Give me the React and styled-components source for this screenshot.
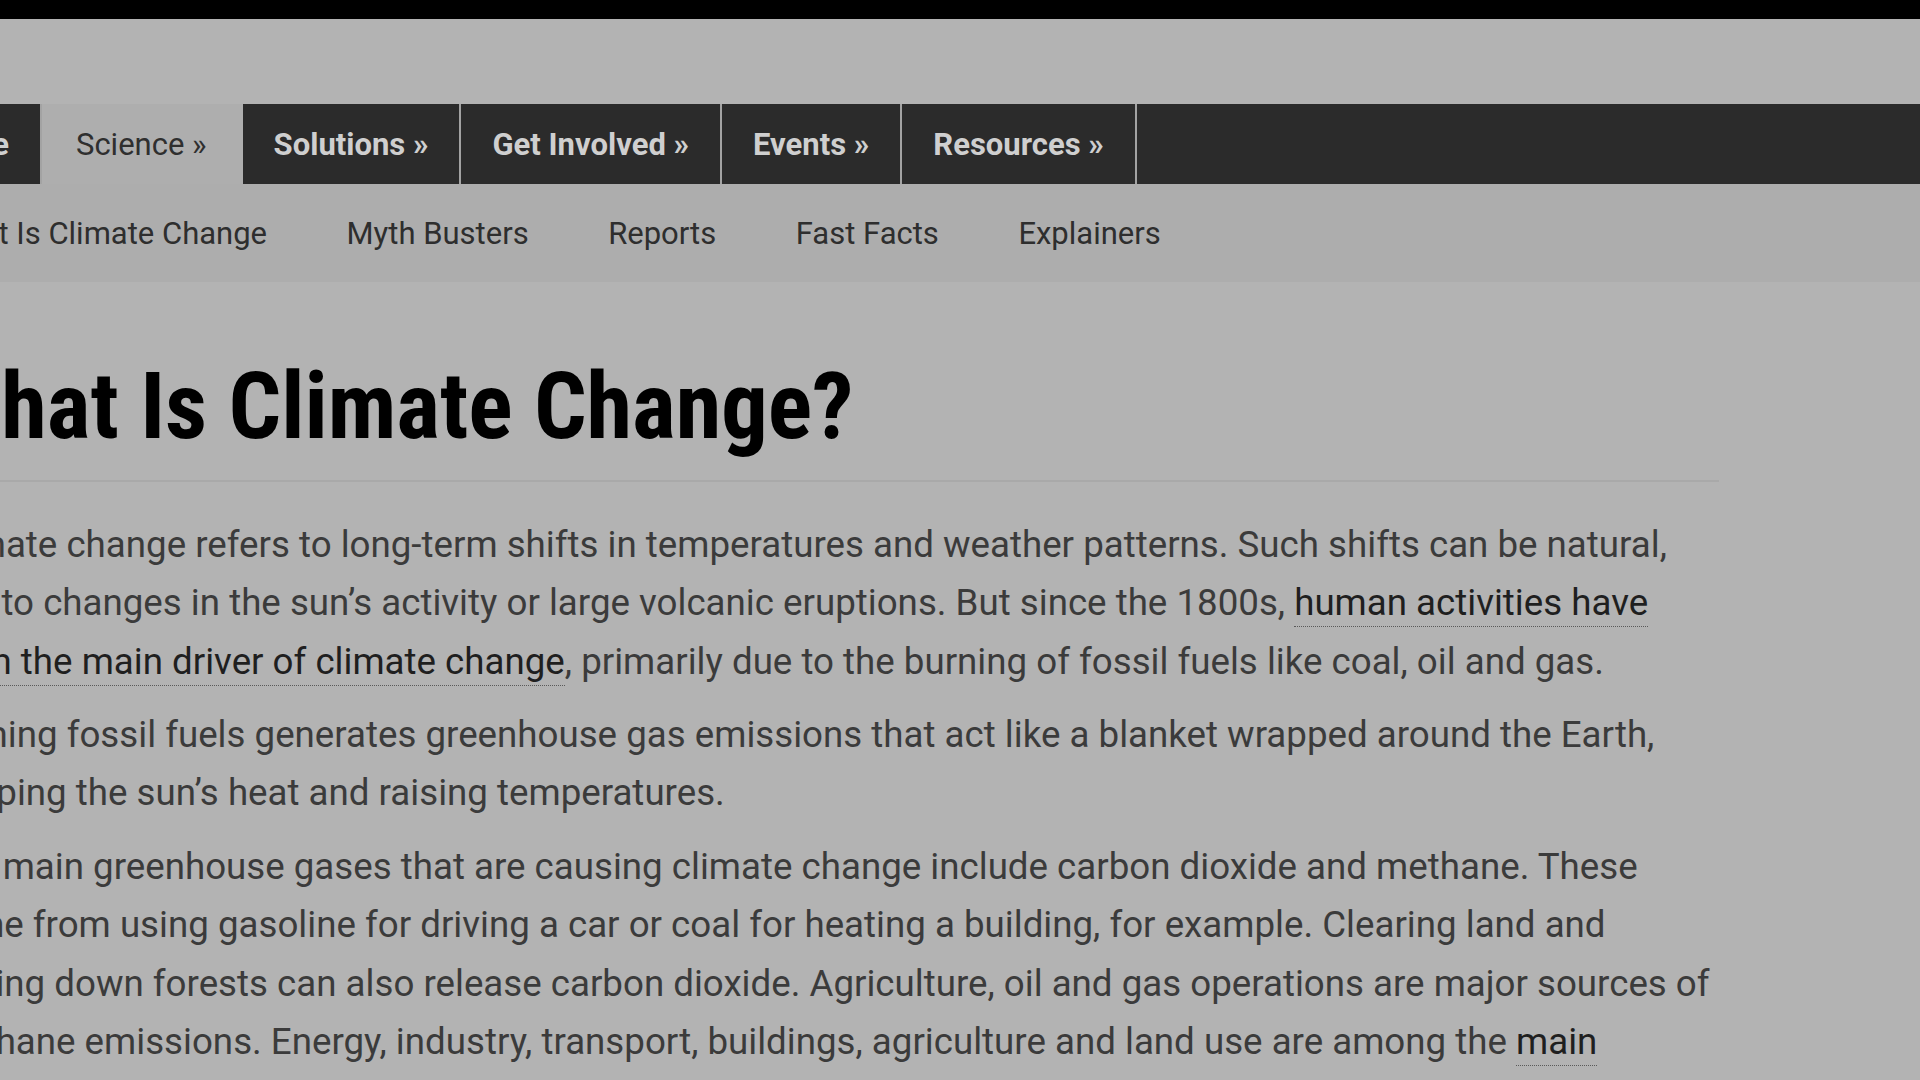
import React from "react";
import styled, { createGlobalStyle } from "styled-components";

const GlobalStyle = createGlobalStyle`
  html,
  body {
    margin: 0;
    padding: 0;
    background: #b3b3b3;
    overflow: hidden;
  }
  body {
    font-family: Roboto, "Liberation Sans", sans-serif;
  }
`;

const Screen = styled.div`
  width: 1920px;
  height: 1080px;
  overflow: hidden;
  background: #b3b3b3;
`;

const TopStrip = styled.div`
  height: 19px;
  background: #000;
`;

const Masthead = styled.div`
  height: 85px;
`;

const MainNav = styled.nav`
  height: 80px;
  background: #2b2b2b;
`;

const NavList = styled.ul`
  display: flex;
  height: 100%;
  margin: 0 0 0 -105px;
  padding: 0;
  list-style: none;
`;

const NavItem = styled.li`
  display: flex;
  align-items: center;
  padding: 0 ${(p) => (p.$active ? "34px" : "31px")};
  font-size: 31px;
  font-weight: ${(p) => (p.$active ? 400 : 700)};
  color: ${(p) => (p.$active ? "#2f2f2f" : "#cfcfcf")};
  background: ${(p) => (p.$active ? "#aeaeae" : "transparent")};
  border-right: 2px solid ${(p) => (p.$active ? "#aeaeae" : "#a3a3a3")};
  white-space: nowrap;
`;

const SubNav = styled.div`
  height: 98px;
  background: #adadad;
`;

const SubList = styled.ul`
  display: flex;
  align-items: center;
  gap: 79.5px;
  height: 100%;
  margin: 0 0 0 -63px;
  padding: 0;
  list-style: none;
`;

const SubLink = styled.li`
  font-size: 31px;
  color: #2e2e2e;
  white-space: nowrap;
`;

const Article = styled.article`
  width: 1787px;
  margin: 0 0 0 -68px;
`;

const Title = styled.h1`
  margin: 69px 0 0;
  padding-bottom: 16px;
  font-family: "Roboto Condensed", Roboto, sans-serif;
  font-stretch: 87.5%;
  font-size: 92.5px;
  font-weight: 700;
  line-height: 1.22;
  color: #000;
  border-bottom: 2px solid #a9a9a9;
  white-space: nowrap;
`;

const Para = styled.p`
  margin: ${(p) => (p.$first ? "34px" : "15px")} 0 0;
  font-size: 36.7px;
  line-height: 58.4px;
  color: #3b3b3b;
  white-space: nowrap;
`;

const TextLink = styled.a`
  color: #1f1f1f;
  text-decoration: none;
  padding-bottom: 2px;
  border-bottom: 1px dotted #5a5a5a;
`;

const mainItems = ["Home", "Science »", "Solutions »", "Get Involved »", "Events »", "Resources »"];
const subItems = ["What Is Climate Change", "Myth Busters", "Reports", "Fast Facts", "Explainers"];

export default function App() {
  return (
    <Screen>
      <GlobalStyle />
      <TopStrip />
      <Masthead />
      <MainNav>
        <NavList>
          {mainItems.map((item) => (
            <NavItem key={item} $active={item === "Science »"}>
              {item}
            </NavItem>
          ))}
        </NavList>
      </MainNav>
      <SubNav>
        <SubList>
          {subItems.map((item) => (
            <SubLink key={item}>{item}</SubLink>
          ))}
        </SubList>
      </SubNav>
      <Article>
        <Title>What Is Climate Change?</Title>
        <Para $first>
          Climate change refers to long-term shifts in temperatures and weather patterns. Such shifts can be natural,
          <br />
          due to changes in the sun’s activity or large volcanic eruptions. But since the 1800s,{" "}
          <TextLink>
            human activities have
            <br />
            been the main driver of climate change
          </TextLink>
          , primarily due to the burning of fossil fuels like coal, oil and gas.
        </Para>
        <Para>
          Burning fossil fuels generates greenhouse gas emissions that act like a blanket wrapped around the Earth,
          <br />
          trapping the sun’s heat and raising temperatures.
        </Para>
        <Para>
          The main greenhouse gases that are causing climate change include carbon dioxide and methane. These
          <br />
          come from using gasoline for driving a car or coal for heating a building, for example. Clearing land and
          <br />
          cutting down forests can also release carbon dioxide. Agriculture, oil and gas operations are major sources of
          <br />
          methane emissions. Energy, industry, transport, buildings, agriculture and land use are among the{" "}
          <TextLink>main</TextLink>
          <br />
          emitters.
        </Para>
      </Article>
    </Screen>
  );
}
